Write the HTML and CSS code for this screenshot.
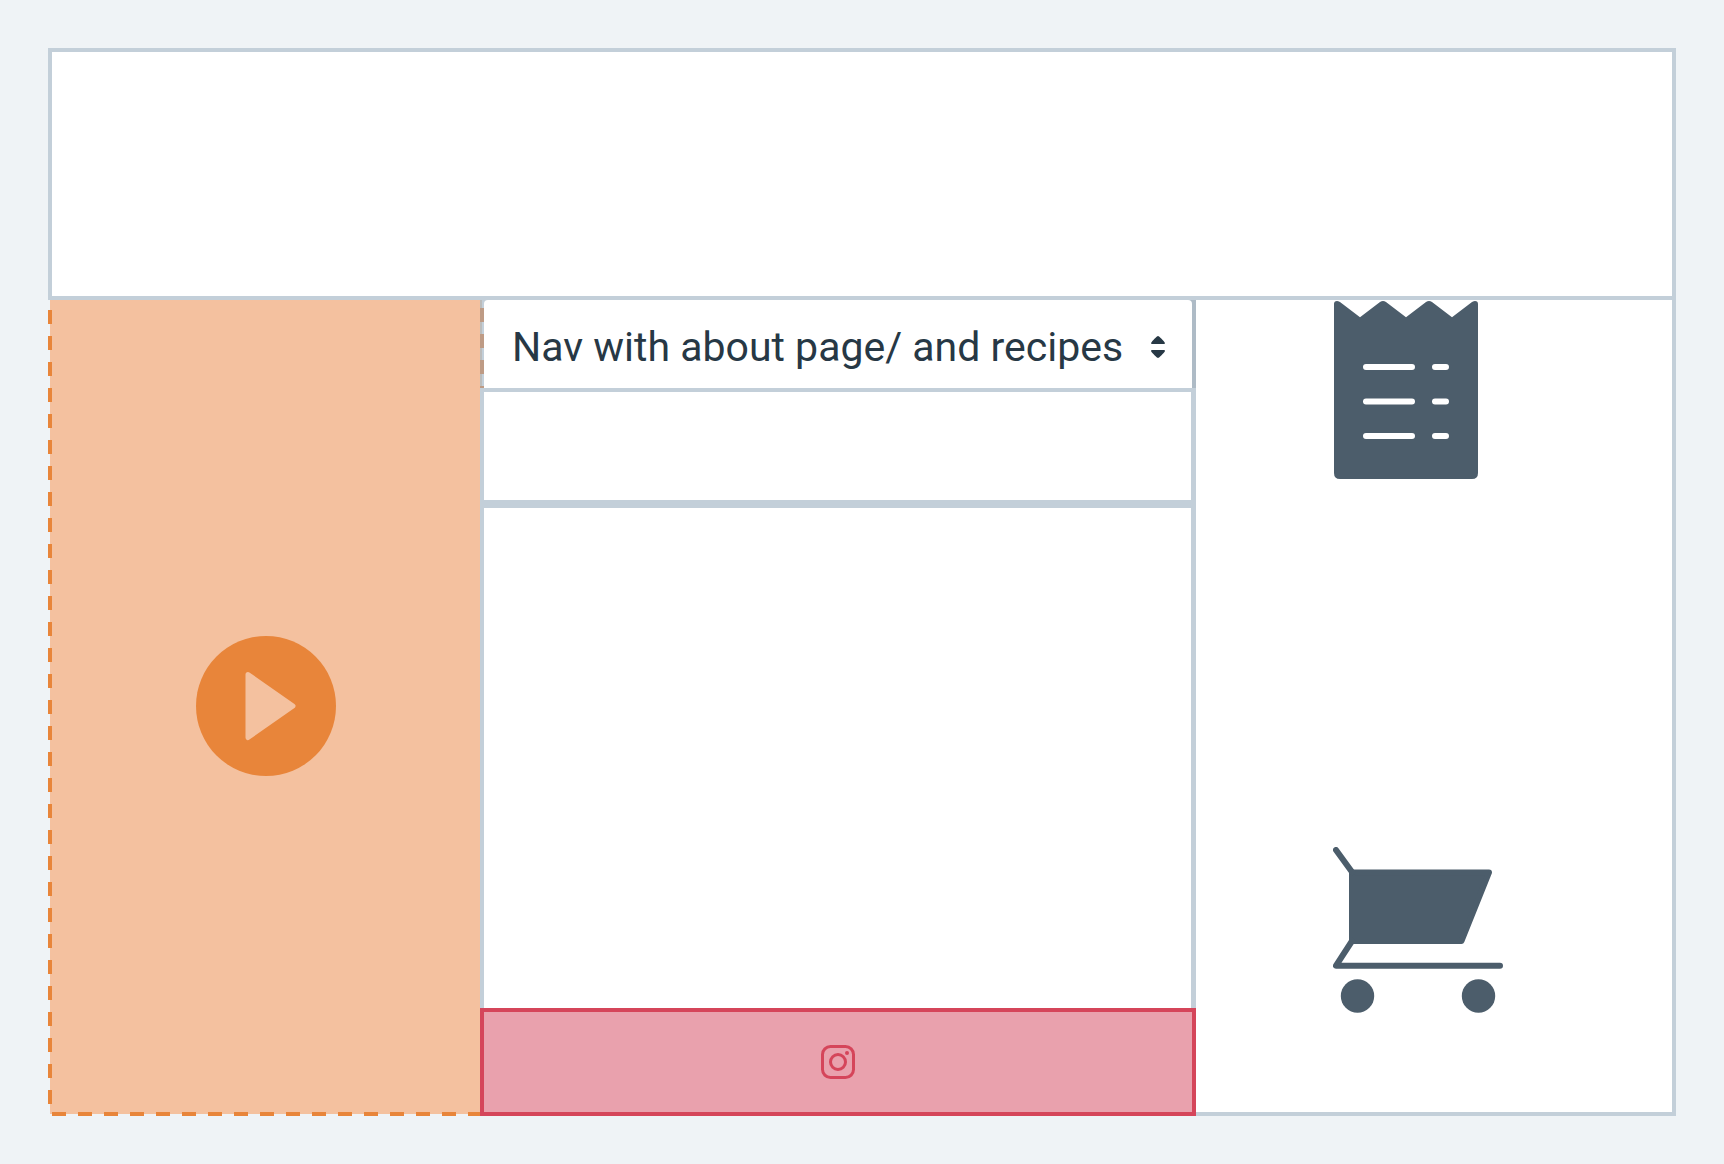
FILE: index.html
```html
<!DOCTYPE html>
<html lang="en">
<head>
  <meta charset="utf-8">
  <meta name="viewport" content="width=device-width, initial-scale=1">
  <title>Recipes wireframe</title>
  <link rel="stylesheet" href="styles.css">
</head>
<body>
  <div class="frame">
    <header class="banner"></header>
    <aside class="video">
      <svg class="play-icon" viewBox="0 0 140 140" aria-hidden="true">
        <circle class="play-disc" cx="70" cy="70" r="70"/>
        <path class="play-arrow" d="M52 38.500 97 70 52 101.500Z"/>
      </svg>
    </aside>
    <main class="content">
      <nav class="nav">
        <select class="nav-select" aria-label="Navigation">
          <option>Nav with about page/ and recipes</option>
        </select>
        <svg class="nav-arrows" viewBox="0 0 14 22" aria-hidden="true">
          <path d="M7 0C8 0 13 5 14 7Q14 8 13 8H1Q0 8 0 7C1 5 6 0 7 0ZM7 22C6 22 1 17 0 15Q0 14 1 14H13Q14 14 14 15C13 17 8 22 7 22Z"/>
        </svg>
      </nav>
      <section class="intro"></section>
      <section class="feed"></section>
      <footer class="social">
        <svg class="instagram-icon" viewBox="0 0 34 34" aria-hidden="true">
          <rect x="1.500" y="1.500" width="31" height="31" rx="8"/>
          <circle cx="17" cy="17" r="7.500"/>
          <circle class="instagram-dot" cx="26" cy="8" r="2"/>
        </svg>
      </footer>
    </main>
    <aside class="shop">
      <svg class="receipt-icon" viewBox="0 0 170 179" aria-hidden="true">
        <path class="icon-fill" d="M1 4Q1 1 4 1Q5 1 7 2L27 17.300 47 2Q50 0 53 2L73 17.300 93 2Q96 0 99 2L119 17.300 139 2Q141 1 142 1Q145 1 145 4V173Q145 179 139 179H7Q1 179 1 173Z"/>
        <path class="receipt-lines" d="M33 67H79M102 67H113M33 101.500H79M102 101.500H113M33 136H79M102 136H113"/>
      </svg>
      <svg class="cart-icon" viewBox="0 0 170 166" aria-hidden="true">
        <path class="cart-basket" d="M19 25.500H156L128.500 94H19Z"/>
        <path class="cart-frame" d="M3 3 19 25M19 94 3 118.700H167"/>
        <circle class="icon-fill" cx="24.500" cy="149" r="16.700"/>
        <circle class="icon-fill" cx="145.500" cy="149" r="16.700"/>
      </svg>
    </aside>
  </div>
</body>
</html>
```
FILE: styles.css
```css
:root {
  --page: #eff3f6;
  --line: #c3cfd9;
  --orange: #e8853a;
  --peach: #f4c19f;
  --red: #d5455a;
  --pink: #e9a1ad;
  --slate: #4c5d6b;
  --ink: #273845;
}

* {
  box-sizing: border-box;
}

body {
  margin: 0;
  min-height: 100vh;
  padding: 48px;
  display: flex;
  background: var(--page);
  font-family: Roboto, "Liberation Sans", sans-serif;
  color: var(--ink);
}

svg {
  display: block;
  flex: none;
}

.frame {
  flex: 1;
  display: grid;
  grid-template-columns: 432fr 716fr 480fr;
  grid-template-rows: 252px 1fr;
}

.banner {
  grid-column: 1 / -1;
  background: #fff;
  border: 4px solid var(--line);
}

/* Dashes straddle the left and bottom edges of the tinted area */
.video {
  display: flex;
  align-items: center;
  justify-content: center;
  padding: 0 0 4px 4px;
  background:
    linear-gradient(var(--orange) 14px, transparent 14px) 0 10px / 4px 26px repeat-y,
    linear-gradient(90deg, var(--orange) 14px, transparent 14px) 4px 100% / 26px 4px repeat-x,
    linear-gradient(var(--peach), var(--peach)) 100% 0 / calc(100% - 2px) calc(100% - 2px) no-repeat;
}

.play-icon {
  width: 140px;
  height: 140px;
}

.play-disc {
  fill: var(--orange);
}

.play-arrow {
  fill: var(--peach);
  stroke: var(--peach);
  stroke-width: 5;
  stroke-linejoin: round;
}

.content {
  display: flex;
  flex-direction: column;
}

.nav {
  display: grid;
  align-items: center;
  height: 92px;
  padding: 0 4px;
  border-bottom: 4px solid var(--line);
  background:
    linear-gradient(#be9b85 14px, transparent 14px) 0 8px / 4px 26px repeat-y,
    linear-gradient(90deg, #bcbcbb 2px, var(--line) 2px) 0 0 / 8px 100% no-repeat,
    linear-gradient(#aebbc6, #aebbc6) 100% 0 / 8px 100% no-repeat;
}

.nav-select {
  grid-area: 1 / 1;
  width: 100%;
  height: 88px;
  margin: 0;
  padding: 6px 56px 0 28px;
  border: 0;
  border-radius: 4px 4px 0 0;
  appearance: none;
  background: #fff;
  color: inherit;
  font: 400 41px/48px Roboto, "Liberation Sans", sans-serif;
}

.nav-arrows {
  grid-area: 1 / 1;
  justify-self: end;
  width: 14px;
  height: 22px;
  margin: 6px 27px 0 0;
  z-index: 1;
  fill: var(--ink);
  pointer-events: none;
}

.intro,
.feed {
  background: #fff;
  border: solid var(--line);
  border-width: 0 5px 0 4px;
}

.intro {
  height: 116px;
  border-bottom-width: 8px;
}

.feed {
  flex: 1;
}

.social {
  display: flex;
  align-items: center;
  justify-content: center;
  height: 108px;
  background: var(--pink);
  border: 4px solid var(--red);
}

.instagram-icon {
  width: 34px;
  height: 34px;
  fill: none;
  stroke: var(--red);
  stroke-width: 3;
}

.instagram-dot {
  fill: var(--red);
  stroke: none;
}

.shop {
  display: flex;
  flex-direction: column;
  align-items: flex-start;
  justify-content: space-between;
  padding: 0 0 99px 137px;
  background: #fff;
  border: solid var(--line);
  border-width: 0 4px 4px 0;
}

.icon-fill {
  fill: var(--slate);
}

.receipt-icon {
  width: 170px;
  height: 179px;
}

.receipt-lines {
  fill: none;
  stroke: #fff;
  stroke-width: 6;
  stroke-linecap: round;
}

.cart-icon {
  width: 170px;
  height: 166px;
}

.cart-basket,
.cart-frame {
  fill: none;
  stroke: var(--slate);
  stroke-width: 6;
  stroke-linecap: round;
  stroke-linejoin: round;
}

.cart-basket {
  fill: var(--slate);
}
```
